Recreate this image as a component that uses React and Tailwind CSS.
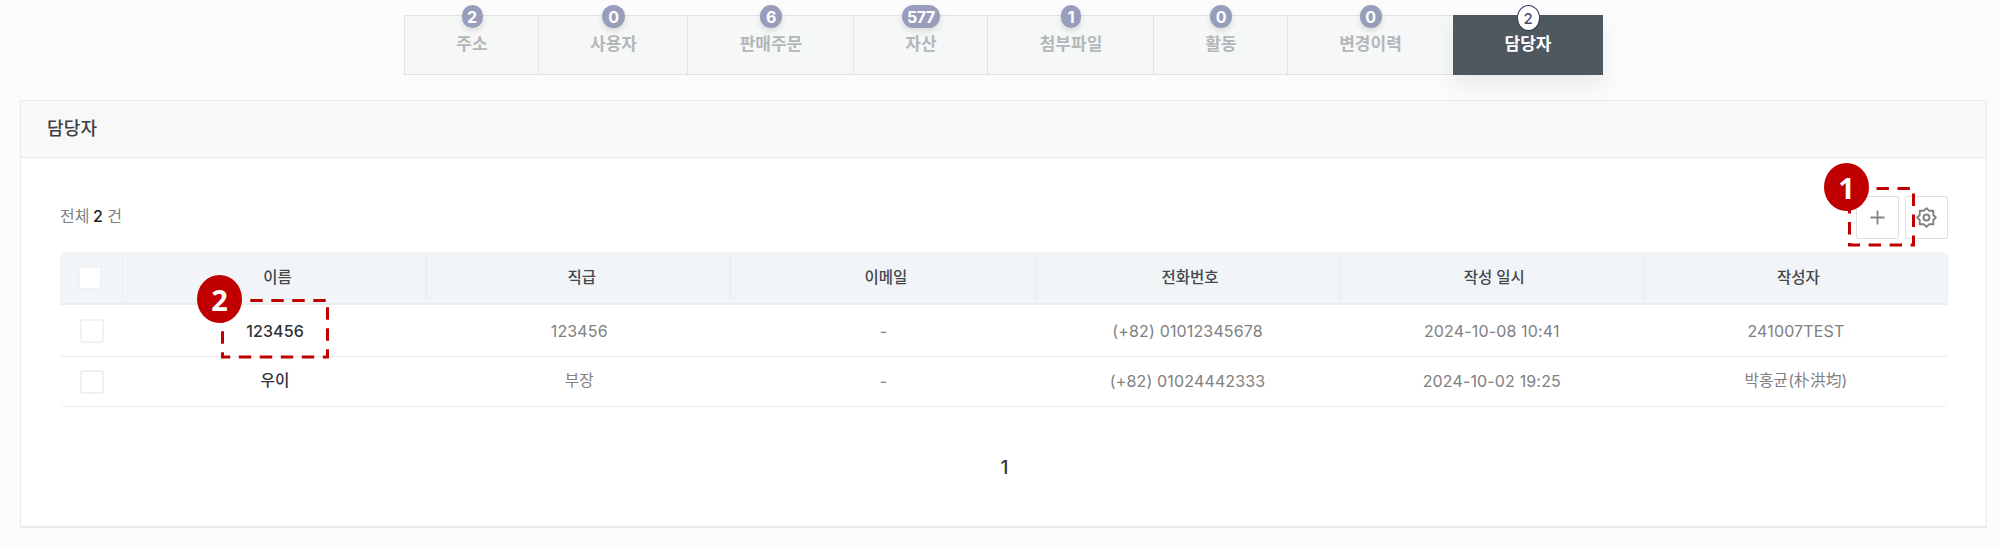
const KR = "font-['Inter','Noto_Sans_CJK_KR',sans-serif]";

const TABS = [
  { label: '주소', count: 2, width: 'w-[134px]', badge: 'w-[21px]' },
  { label: '사용자', count: 0, width: 'w-[149px]', badge: 'w-[23px]' },
  { label: '판매주문', count: 6, width: 'w-[166px]', badge: 'w-[22px]' },
  { label: '자산', count: 577, width: 'w-[134px]', badge: 'w-[38px]' },
  { label: '첨부파일', count: 1, width: 'w-[166px]', badge: 'w-[20px]' },
  { label: '활동', count: 0, width: 'w-[134px]', badge: 'w-[22px]' },
  { label: '변경이력', count: 0, width: 'w-[165px]', badge: 'w-[22px]' },
];

const COLUMNS = ['이름', '직급', '이메일', '전화번호', '작성 일시', '작성자'];

const ROWS = [
  ['123456', '123456', '-', '(+82) 01012345678', '2024-10-08 10:41', '241007TEST'],
  ['우이', '부장', '-', '(+82) 01024442333', '2024-10-02 19:25', '박홍균(朴洪均)'],
];

function Tab({ tab }) {
  return (
    <li className={`relative flex h-[60px] justify-center border-y border-l border-[#e0e4e4] bg-[#f6f8f8] pt-[16px] pl-px ${tab.width}`}>
      <span className={`absolute -top-[11px] flex h-[23px] items-center justify-center rounded-full bg-[#979dbb] text-[16px] leading-none font-bold tracking-[-0.3px] text-white shadow-[0_3px_6px_rgba(0,0,0,0.12)] ${tab.badge}`}>
        {tab.count}
      </span>
      <span className="text-[17px] leading-[24px] font-bold text-[#b4b7b8]">{tab.label}</span>
    </li>
  );
}

function Checkbox() {
  return <span className="block h-[24px] w-[24px] rounded-[3px] border-2 border-[#f0f0f5] bg-white" />;
}

function Marker({ number, className }) {
  return (
    <span className={`absolute flex h-[48px] w-[45px] items-center justify-center rounded-[50%] bg-[#c00000] font-['Noto_Sans',sans-serif] text-[29px] leading-none font-bold text-white ${className}`}>
      {number}
    </span>
  );
}

function Callout({ number, width, height, offset, className }) {
  return (
    <div className={`pointer-events-none absolute ${className}`}>
      <svg width={width + 3} height={height + 3} className="block">
        <rect x="1.5" y="1.5" width={width} height={height} fill="none" stroke="#c00000" strokeWidth="3" strokeDasharray="12.4 8.6" strokeDashoffset={-offset} />
      </svg>
      <Marker number={number} className="-top-[24px] -left-[24px]" />
    </div>
  );
}

export default function App() {
  return (
    <div className={`h-[549px] w-[2000px] overflow-hidden bg-[#fcfcfc] pt-[15px] ${KR}`}>
      <ul className="ml-[404px] flex">
        {TABS.map((tab) => (
          <Tab key={tab.label} tab={tab} />
        ))}
        <li className="relative z-10 ml-px flex h-[60px] w-[150px] justify-center bg-[#4f575f] pt-[17px] shadow-[0_10px_24px_rgba(0,0,0,0.08)]">
          <span className="absolute -top-[10px] flex h-[26px] w-[23px] items-center justify-center rounded-[50%] border border-[#2f3350] bg-white text-[15px] leading-none font-medium text-[#4a4d70]">
            2
          </span>
          <span className="text-[17px] leading-[24px] font-bold text-white">담당자</span>
        </li>
      </ul>

      <section className="mt-[25px] ml-[20px] h-[428px] w-[1967px] border border-b-2 border-[#e7ebf1] bg-white">
        <h2 className="flex h-[57px] items-center border-b border-[#e3e9f0] bg-[#f8f8f8] pb-[2px] pl-[26px] text-[18px] font-medium tracking-[0.2px] text-[#3c3f44]">
          담당자
        </h2>

        <div className="mt-[38px] mr-[38px] ml-[39px] flex h-[43px] items-center justify-between">
          <p className="pb-[3px] text-[16px] text-[#808080]">
            전체 <span className="-ml-[1px] font-medium text-[#222]">2</span> 건
          </p>
          <div className="flex gap-[6px]">
            <button className="relative flex h-[43px] w-[43px] items-center justify-center rounded-[2px] border border-[#dfdfdf] bg-white">
              <svg width="15" height="15" viewBox="0 0 15 15" fill="none" stroke="#858585" strokeWidth="1.8">
                <path d="M7.5 0.5v14M0.5 7.5h14" />
              </svg>
            </button>
            <button className="flex h-[43px] w-[43px] items-center justify-center rounded-[2px] border border-[#dfdfdf] bg-white">
              <svg width="21" height="21" viewBox="0 0 21 21" fill="none" stroke="#808080" strokeWidth="1.9" strokeLinejoin="round">
                <path d="M10.5 1.2 L13 3.7 H17.3 V8 L19.8 10.5 L17.3 13 V17.3 H13 L10.5 19.8 L8 17.3 H3.7 V13 L1.2 10.5 L3.7 8 V3.7 H8 Z" />
                <circle cx="10.5" cy="10.5" r="3" />
              </svg>
            </button>
          </div>
        </div>

        <div className="mt-[13px] ml-[39px] w-[1888px]">
          <div className="flex h-[53px] items-start rounded-t-[6px] border-b-2 border-[#ebeef1] bg-[#f1f5f8]">
            <div className="flex h-[51px] w-[63px] items-center border-r border-[#e9eef2] pl-[18px]">
              <Checkbox />
            </div>
            {COLUMNS.map((name) => (
              <div key={name} className="mt-[2px] flex h-[46px] flex-1 items-center justify-center border-r border-[#e4ebf1] pt-[2px] pl-[6px] text-[15.5px] font-medium text-[#44474b] last:border-[#eaeff3]">
                {name}
              </div>
            ))}
          </div>
          {ROWS.map((row, r) => (
            <div key={row[4]} className={`flex items-center border-b border-[#ececee] ${r === 0 ? 'h-[52px]' : 'h-[50px] rounded-b-[6px]'}`}>
              <div className="w-[63px] pl-[20px]">
                <Checkbox />
              </div>
              {row.map((cell, i) => (
                <div key={i} className={`flex-1 text-center tracking-[0.15px] ${r === 0 ? '' : 'pb-[1px]'} ${i === 0 ? 'font-medium text-[#303338]' : 'text-[#808080]'} ${/^[가-힣]/.test(cell) ? 'text-[15.7px]' : 'text-[16px]'}`}>
                  {cell}
                </div>
              ))}
            </div>
          ))}
        </div>

        <nav className="mt-[48px] flex justify-center pl-[2px] text-[19px] leading-[26px] font-medium text-[#33363b]">1</nav>
      </section>

      <Callout number="2" width={105} height={56.5} offset={6.8} className="top-[299px] left-[221px]" />
      <Callout number="1" width={64} height={56.5} offset={6} className="top-[187px] left-[1848px]" />
    </div>
  );
}
